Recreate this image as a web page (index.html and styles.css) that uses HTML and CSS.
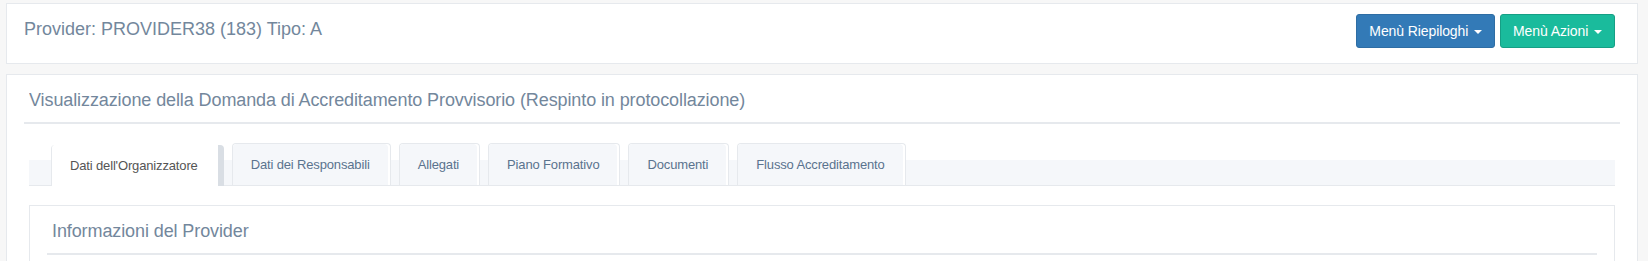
FILE: index.html
```html
<!DOCTYPE html>
<html lang="it">

<head>
    <meta charset="UTF-8">
    <meta name="viewport" content="width=device-width, initial-scale=1.0">
    <title>Domanda di Accreditamento</title>
    <link rel="stylesheet" href="styles.css">
</head>

<body>

    <div class="right_col">
        <!-- intestazione provider -->
        <div class="x_panel provider_bar">
            <h3 class="provider_name">Provider: PROVIDER38 (183) Tipo: A</h3>
            <div class="menu_buttons">
                <button class="btn btn-primary">Menù Riepiloghi <span class="caret"></span></button>
                <button class="btn btn-success">Menù Azioni <span class="caret"></span></button>
            </div>
        </div>

        <!-- domanda -->
        <div class="x_panel">
            <div class="x_title">
                <h2>Visualizzazione della Domanda di Accreditamento Provvisorio (Respinto in protocollazione)</h2>
            </div>
            <div class="x_content">
                <ul class="bar_tabs">
                    <li class="active"><a href="#">Dati dell'Organizzatore</a></li>
                    <li><a href="#">Dati dei Responsabili</a></li>
                    <li><a href="#">Allegati</a></li>
                    <li><a href="#">Piano Formativo</a></li>
                    <li><a href="#">Documenti</a></li>
                    <li><a href="#">Flusso Accreditamento</a></li>
                </ul>

                <div class="tab_content">
                    <div class="x_panel">
                        <div class="x_title">
                            <h2>Informazioni del Provider</h2>
                        </div>
                        <div class="x_content info_box"></div>
                    </div>
                </div>
            </div>
        </div>
    </div>

</body>

</html>
```

FILE: styles.css
```css
html, body {
    margin: 0;
    overflow: hidden;
}
body {
    background: #F7F7F7;
    font-family: "Liberation Sans", Arial, sans-serif;
    font-size: 13px;
    line-height: 1.471;
    color: #73879C;
}
.right_col {
    padding: 3px 10px 0 6px;
}
.x_panel {
    background: #fff;
    border: 1px solid #E6E9ED;
    padding: 10px 17px;
    margin-bottom: 10px;
}
.provider_bar {
    display: flex;
    justify-content: space-between;
    align-items: flex-start;
}
.provider_name {
    margin: 0;
    padding-top: 2px;
    font-size: 18px;
    font-weight: normal;
    line-height: 26px;
}
.menu_buttons {
    display: flex;
}
.btn {
    font-family: inherit;
    font-size: 14px;
    line-height: 20px;
    letter-spacing: -0.1px;
    padding: 6px 12px;
    border: 1px solid transparent;
    border-radius: 3px;
    margin: 0 5px 5px 0;
    color: #fff;
    cursor: pointer;
}
.btn-primary {
    background-color: #337ab7;
    border-color: #2e6da4;
}
.btn-success {
    background-color: #1ABB9C;
    border-color: #169F85;
}
.caret {
    display: inline-block;
    width: 0;
    height: 0;
    margin-left: 2px;
    vertical-align: middle;
    border-top: 4px solid;
    border-right: 4px solid transparent;
    border-left: 4px solid transparent;
}
.x_title {
    border-bottom: 2px solid #E6E9ED;
    padding: 1px 5px 6px;
    margin-bottom: 10px;
}
.x_title h2 {
    margin: 5px 0 5px;
    font-size: 18px;
    font-weight: normal;
    line-height: 19.8px;
    letter-spacing: -0.1px;
    white-space: nowrap;
    overflow: hidden;
    text-overflow: ellipsis;
}
.x_content {
    display: flow-root;
    padding: 5px 5px 6px;
}
.bar_tabs {
    display: flex;
    align-items: flex-start;
    list-style: none;
    height: 25px;
    margin: 21px 0 19px;
    padding: 0 0 0 14px;
    background: #F5F7FA;
    border-bottom: 1px solid #E6E9ED;
}
.bar_tabs li {
    margin-top: -17px;
    margin-left: 8px;
    background: #fff;
    border: 1px solid #E6E9ED;
    border-bottom: none;
    border-radius: 4px 4px 0 0;
}
.bar_tabs li a {
    display: block;
    margin-right: 2px;
    padding: 10px 17px;
    line-height: 19px;
    letter-spacing: -0.15px;
    border: 1px solid transparent;
    border-radius: 4px 4px 0 0;
    background: #F5F7FA;
    color: #5A738E;
    text-decoration: none;
}
.bar_tabs li.active {
    margin-top: -15px;
    border-top: 0;
    border-right: 6px solid #D9DEE4;
    position: relative;
    z-index: 1;
}
.bar_tabs li.active a {
    background: #fff;
    color: #555;
}
.info_box {
    height: 60px;
}
```
